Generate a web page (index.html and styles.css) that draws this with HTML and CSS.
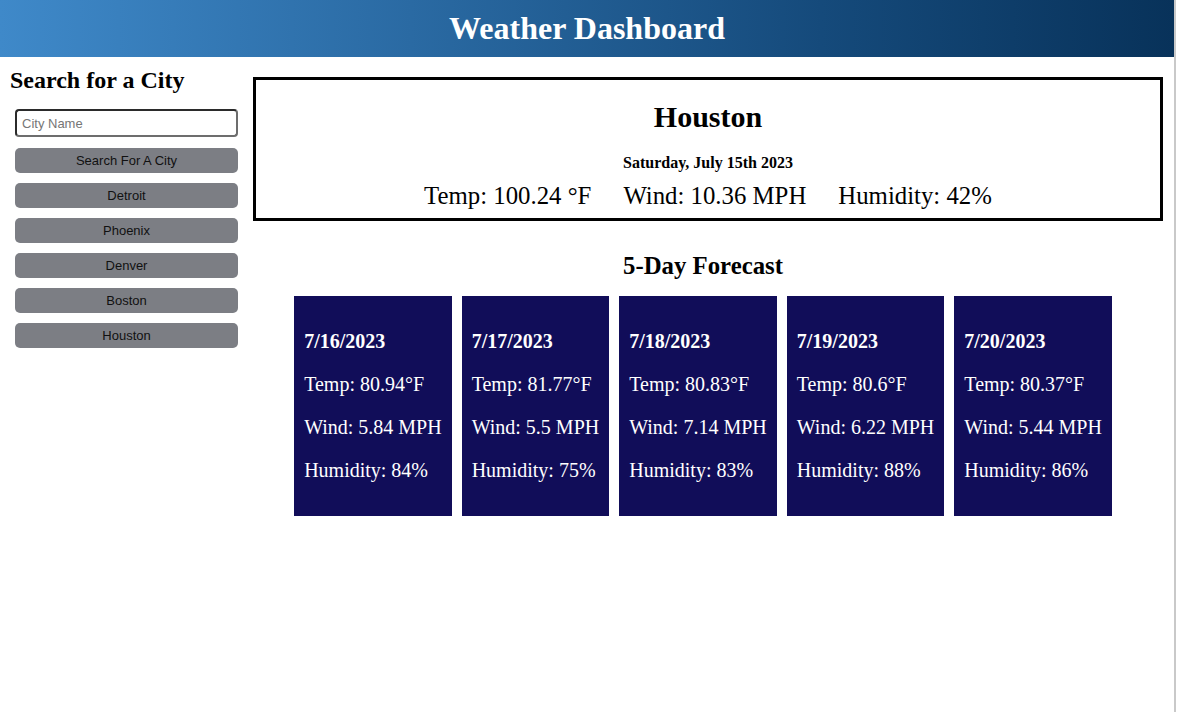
FILE: index.html
```html
<!DOCTYPE html>
<html lang="en">
<head>
<meta charset="utf-8">
<title>Weather Dashboard</title>
<link rel="stylesheet" href="styles.css">
</head>
<body>
<div class="page">
  <header class="topbar">
    <h1 class="title">Weather Dashboard</h1>
  </header>
  <div class="content">
    <aside class="sidebar">
      <h2 class="side-title">Search for a City</h2>
      <input class="city-input" type="text" placeholder="City Name">
      <button class="btn">Search For A City</button>
      <button class="btn">Detroit</button>
      <button class="btn">Phoenix</button>
      <button class="btn">Denver</button>
      <button class="btn">Boston</button>
      <button class="btn">Houston</button>
    </aside>
    <main class="main">
      <section class="current">
        <h2 class="city">Houston</h2>
        <h4 class="date">Saturday, July 15th 2023</h4>
        <div class="stats">
          <span>Temp: 100.24 °F</span>
          <span>Wind: 10.36 MPH</span>
          <span>Humidity: 42%</span>
        </div>
      </section>
      <section class="forecast">
        <h2 class="forecast-title">5-Day Forecast</h2>
        <div class="cards">
          <div class="card">
            <p class="card-date">7/16/2023</p>
            <p>Temp: 80.94°F</p>
            <p>Wind: 5.84 MPH</p>
            <p>Humidity: 84%</p>
          </div>
          <div class="card">
            <p class="card-date">7/17/2023</p>
            <p>Temp: 81.77°F</p>
            <p>Wind: 5.5 MPH</p>
            <p>Humidity: 75%</p>
          </div>
          <div class="card">
            <p class="card-date">7/18/2023</p>
            <p>Temp: 80.83°F</p>
            <p>Wind: 7.14 MPH</p>
            <p>Humidity: 83%</p>
          </div>
          <div class="card">
            <p class="card-date">7/19/2023</p>
            <p>Temp: 80.6°F</p>
            <p>Wind: 6.22 MPH</p>
            <p>Humidity: 88%</p>
          </div>
          <div class="card">
            <p class="card-date">7/20/2023</p>
            <p>Temp: 80.37°F</p>
            <p>Wind: 5.44 MPH</p>
            <p>Humidity: 86%</p>
          </div>
        </div>
      </section>
    </main>
  </div>
</div>
</body>
</html>
```

FILE: styles.css
```css
html, body {
  margin: 0;
  padding: 0;
  background: #ffffff;
}

body {
  font-family: "Liberation Serif", "Times New Roman", serif;
  color: #000;
}

.page {
  width: 1174px;
  min-height: 712px;
  border-right: 2px solid #c9c9c9;
  box-sizing: content-box;
}

.topbar {
  height: 57px;
  background: linear-gradient(to right, #3f89c9 0%, #2a6aa3 35%, #154a7b 70%, #08325a 100%);
  display: flex;
  align-items: center;
  justify-content: center;
}

.title {
  margin: 0;
  color: #ffffff;
  font-size: 32px;
  font-weight: bold;
  line-height: 37px;
}

.content {
  display: flex;
  align-items: flex-start;
}

.sidebar {
  width: 243px;
  box-sizing: border-box;
  padding-left: 10px;
  display: flex;
  flex-direction: column;
  align-items: flex-start;
}

.side-title {
  font-size: 24px;
  margin: 9px 0 15px 0;
  line-height: 28px;
}

.city-input {
  margin-left: 5px;
  width: 223px;
  height: 28px;
  box-sizing: border-box;
  border: 2px solid #2b2b2b;
  border-right-color: #6d6d6d;
  border-bottom-color: #6d6d6d;
  border-radius: 4px;
  padding: 0 5px;
  font-family: "Liberation Sans", Arial, sans-serif;
  font-size: 13px;
  color: #000;
  background: #fff;
  outline: none;
}

.city-input::placeholder {
  color: #767676;
}

.btn {
  margin: 11px 0 0 5px;
  width: 223px;
  height: 25px;
  border: none;
  border-radius: 5px;
  background: #7c7e84;
  color: #111;
  font-family: "Liberation Sans", Arial, sans-serif;
  font-size: 13px;
  padding: 0;
}

.btn + .btn {
  margin-top: 10px;
}

.main {
  flex: 1;
  margin-right: 11px;
}

.current {
  margin: 20px 0 0 10px;
  border: 3px solid #000;
  text-align: center;
  padding-bottom: 8px;
}

.city {
  font-size: 30px;
  margin: 20px 0 20px 0;
  line-height: 34px;
}

.date {
  font-size: 16px;
  margin: 0 0 10px 0;
  line-height: 18px;
}

.stats {
  display: flex;
  justify-content: center;
  gap: 32px;
  font-size: 24.8px;
  line-height: 28px;
}

.forecast {
  text-align: center;
}

.forecast-title {
  font-size: 24.8px;
  line-height: 28px;
  margin: 31px 0 16px 0;
}

.cards {
  display: flex;
  justify-content: center;
  gap: 10px;
}

.card {
  background: #110d59;
  color: #ffffff;
  text-align: left;
  padding: 14px 10px 15px 10px;
  height: 220px;
  box-sizing: border-box;
}

.card p {
  margin: 20px 0;
  font-size: 20px;
  line-height: 23px;
  white-space: nowrap;
}

.card .card-date {
  font-weight: bold;
}
```
